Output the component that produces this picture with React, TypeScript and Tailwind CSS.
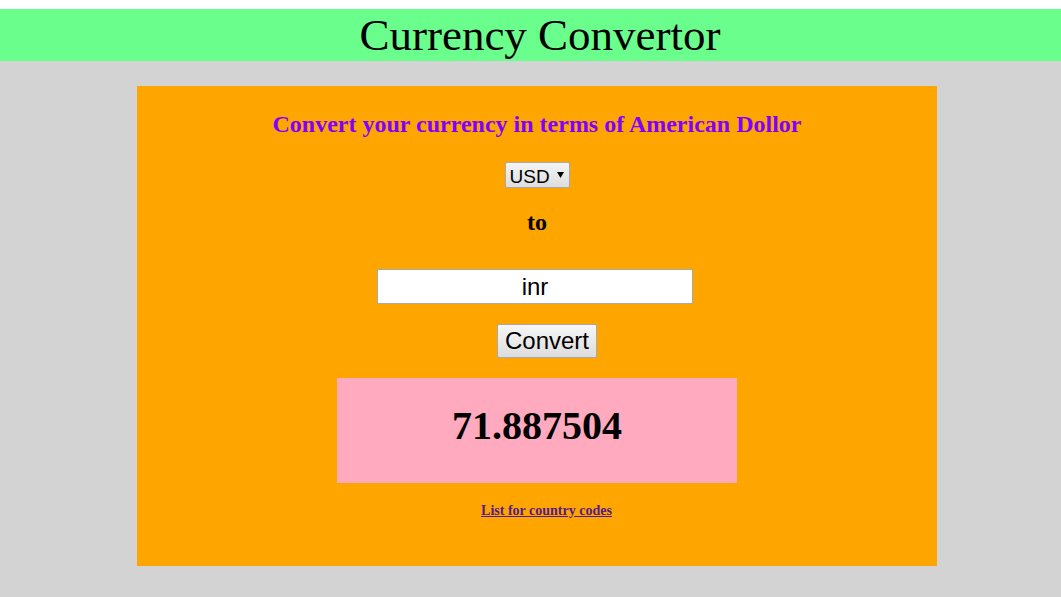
import React, { useState } from "react";

const serif = "font-['Liberation_Serif',serif]";
const sans = "font-['Liberation_Sans',Arial,sans-serif]";

export default function App() {
  const [code, setCode] = useState("inr");

  return (
    <div className="min-h-[597px] bg-[#d3d3d3] flex flex-col">
      <div className="h-[9px] bg-white" />
      <div
        className={`h-[52px] bg-[#6aff8c] flex items-center justify-center pl-[19px] ${serif} text-[45px] leading-none text-black`}
      >
        <h1 className="mt-[1px]">Currency Convertor</h1>
      </div>

      <div className="mt-[25px] ml-[137px] w-[800px] h-[480px] bg-[#ffa500] flex flex-col items-center">
        <h2
          className={`mt-[24px] ${serif} text-[24px] leading-[28px] font-bold text-[#7f00ff]`}
        >
          Convert your currency in terms of American Dollor
        </h2>

        <select
          className={`mt-[24px] h-[26px] pl-[4px] pr-[18px] ${sans} text-[19px] text-black border border-[#a9a9a9] rounded-[2px] appearance-none`}
          style={{
            backgroundImage:
              "url(\"data:image/svg+xml;utf8,<svg xmlns='http://www.w3.org/2000/svg' width='7' height='6'><path d='M0 0h7L3.5 6z' fill='black'/></svg>\"), linear-gradient(#f4f4f4,#dedede)",
            backgroundRepeat: "no-repeat, no-repeat",
            backgroundPosition: "right 5px center, 0 0",
          }}
          defaultValue="USD"
        >
          <option>USD</option>
        </select>

        <div className={`mt-[20px] ${serif} text-[24px] leading-[28px] font-bold text-black`}>to</div>

        <input
          value={code}
          onChange={(e) => setCode(e.target.value)}
          className={`mt-[33px] mr-[4px] w-[316px] h-[35px] bg-white border border-[#a9a9a9] text-center ${sans} text-[24px] text-black outline-none`}
        />

        <button
          className={`mt-[20px] ml-[20px] w-[100px] h-[34px] ${sans} text-[24px] leading-none text-black bg-gradient-to-b from-[#f6f6f6] to-[#dddddd] border border-[#a9a9a9] rounded-[2px]`}
        >
          Convert
        </button>

        <div className="mt-[20px] w-[400px] h-[105px] bg-[#ffaabf] flex items-center justify-center">
          <span className={`${serif} text-[40px] font-bold text-black -mt-[9px]`}>71.887504</span>
        </div>

        <a
          href="#"
          className={`mt-[17px] ml-[19px] ${serif} text-[14px] font-bold text-[#551a8b] underline`}
        >
          List for country codes
        </a>
      </div>
    </div>
  );
}
